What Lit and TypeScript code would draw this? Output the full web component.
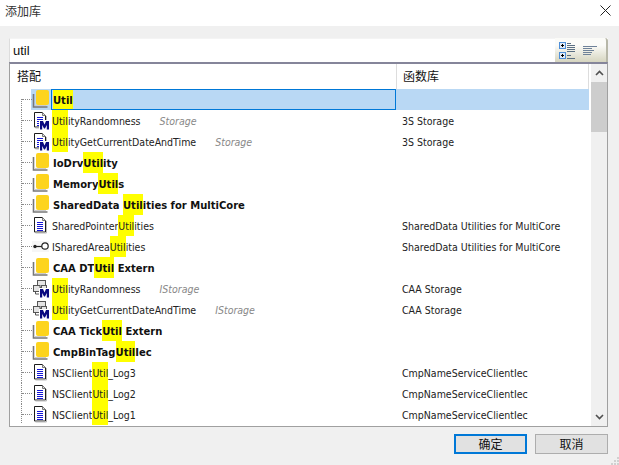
import { LitElement, html, css, svg } from "lit";
import { customElement } from "lit/decorators.js";

type Kind = "folder" | "docm" | "doc" | "key" | "ifm";
interface Row { kind: Kind; pre: string; hit: string; post: string; note?: string; lib?: string; sel?: boolean; }

const rows: Row[] = [
  { kind: "folder", pre: "", hit: "Util", post: "", sel: true },
  { kind: "docm", pre: "", hit: "Util", post: "ityRandomness", note: "Storage", lib: "3S Storage" },
  { kind: "docm", pre: "", hit: "Util", post: "ityGetCurrentDateAndTime", note: "Storage", lib: "3S Storage" },
  { kind: "folder", pre: "IoDrv", hit: "Util", post: "ity" },
  { kind: "folder", pre: "Memory", hit: "Util", post: "s" },
  { kind: "folder", pre: "SharedData ", hit: "Util", post: "ities for MultiCore" },
  { kind: "doc", pre: "SharedPointer", hit: "Util", post: "ities", lib: "SharedData Utilities for MultiCore" },
  { kind: "key", pre: "ISharedArea", hit: "Util", post: "ities", lib: "SharedData Utilities for MultiCore" },
  { kind: "folder", pre: "CAA DT", hit: "Util", post: " Extern" },
  { kind: "ifm", pre: "", hit: "Util", post: "ityRandomness", note: "IStorage", lib: "CAA Storage" },
  { kind: "ifm", pre: "", hit: "Util", post: "ityGetCurrentDateAndTime", note: "IStorage", lib: "CAA Storage" },
  { kind: "folder", pre: "CAA Tick", hit: "Util", post: " Extern" },
  { kind: "folder", pre: "CmpBinTag", hit: "Util", post: "Iec" },
  { kind: "doc", pre: "NSClient", hit: "Util", post: "_Log3", lib: "CmpNameServiceClientIec" },
  { kind: "doc", pre: "NSClient", hit: "Util", post: "_Log2", lib: "CmpNameServiceClientIec" },
  { kind: "doc", pre: "NSClient", hit: "Util", post: "_Log1", lib: "CmpNameServiceClientIec" },
];

const page = () => svg`<path d="M2.500 2.500h8l3 3v11.500h-11z" fill="#fff" stroke="#1c1c1c"/><path d="M10.500 2.500v3h3" fill="#ddd" stroke="#777"/><path d="M14.500 6v12h-11" fill="none" stroke="#bbb"/>`;
const blueLines = () => svg`<path d="M5 7.500h6M5 9.500h6M5 11.500h6M5 13.500h6M5 15.500h6" stroke="#1515d8"/>`;
const mBadge = () => svg`<rect x="7" y="10" width="11" height="10" fill="#fff"/><path d="M8 19.500v-8.500h3l1.500 3.500L14 11h3v8.500h-2.200v-4.500l-1.800 3.500h-1l-1.800-3.500v4.500z" fill="#0a0a80"/>`;

const icons: Record<Kind, () => unknown> = {
  folder: () => svg`<path d="M1.500 5v13h14" fill="none" stroke="#777" stroke-width="1.600"/><path d="M3 16.500h11" stroke="#ccc"/><rect x="4" y="1" width="13" height="15" rx="2" fill="#fdd41d"/>`,
  docm: () => svg`${page()}${blueLines()}${mBadge()}`,
  doc: () => svg`${page()}${blueLines()}`,
  key: () => svg`<rect x="0" y="5" width="17" height="11" fill="#f6f6f6"/><path d="M2 10.500h8" stroke="#222" stroke-width="1.200"/><circle cx="3" cy="10.500" r="1.700" fill="#222"/><circle cx="13" cy="10" r="3.200" fill="#fff" stroke="#222" stroke-width="1.200"/>`,
  ifm: () => svg`<g fill="#e4e4e4" stroke="#555"><rect x="5.500" y="2.500" width="8" height="7"/><rect x="1.500" y="7.500" width="6.500" height="6"/><rect x="9.500" y="7.500" width="5" height="4"/><path d="M3.500 13.500v2.500h4" fill="none"/></g>${mBadge()}`,
};

@customElement("app-root")
export class AppRoot extends LitElement {
  static styles = css`
    :host { display: block; width: 619px; height: 465px; background: #f0f0f0; overflow: hidden; position: relative;
      font-family: "DejaVu Sans", "Noto Sans CJK SC", sans-serif; font-stretch: condensed; font-size: 10.500px; color: #111; }
    .title { height: 26px; box-sizing: border-box; background: #fff; display: flex; align-items: center; justify-content: space-between; padding: 0 8px 6px 5px; font: 12px "Noto Sans CJK SC", sans-serif; color: #333; }
    .content { display: flex; flex-direction: column; padding: 12px 11px 0 9px; }
    .search { height: 24px; display: flex; background: #fff; }
    .q { flex: 1; padding-left: 3px; font: 13px/23px "Liberation Sans", sans-serif; border-left: 1px solid #ddd; border-top: 1px solid #f4f4f4; }
    .tools { width: 53px; background: linear-gradient(#fbfbf8 30%, #d6d5c0); border-radius: 0 3px 0 0; display: flex; align-items: flex-start; padding: 4px 0 0 4px; gap: 7px; box-sizing: border-box; border-right: 2px solid #b7b7a8; }
    .tree { height: 365px; box-sizing: border-box; border: 1px solid #a0a0a0; border-top: 2px solid #85859a; background: #fff; display: flex; }
    .main { width: 579px; display: flex; flex-direction: column; flex: none; }
    .head { height: 25px; display: flex; align-items: center; font: 12px "Noto Sans CJK SC", sans-serif; flex: none; }
    .hn { width: 387px; padding-left: 7px; box-sizing: border-box; border-right: 1px solid #ddd; height: 25px; line-height: 24px; }
    .hl { flex: 1; padding-left: 6px; line-height: 24px; height: 25px; border-right: 1px solid #ddd; }
    .row { height: 21px; display: flex; align-items: center; flex: none; }
    .row.sel { background: linear-gradient(90deg, #fff 21px, #b9d8f4 21px); }
    .gutter { width: 22px; height: 21px; flex: none; position: relative; }
    .gutter::before { content: ""; position: absolute; left: 11px; top: 0; bottom: 0; border-left: 1px dotted #8a8a8a; }
    .sel .gutter::before { top: 10px; }
    .row:last-child .gutter::before { bottom: 2px; }
    .gutter::after { content: ""; position: absolute; left: 12px; width: 10px; top: 10px; border-top: 1px dotted #8a8a8a; }
    .ico { width: 19px; height: 21px; flex: none; display: block; }
    .name { width: 345px; height: 21px; box-sizing: border-box; flex: none; display: flex; white-space: pre; line-height: 22px; color: #222; padding-left: 1px; }
    .name.bold { font-weight: 700; font-size: 10px; font-stretch: normal; color: #111; padding-left: 2px; line-height: 24px; }
    .sel .name.bold { border: 1px solid #0078d7; padding-left: 1px; line-height: 22px; }
    mark { background: #ff0; color: inherit; height: 21px; display: inline-block; }
    .sel mark { height: 19px; }
    .note { color: #888; font-style: italic; margin-left: 19px; }
    .lib { padding-left: 6px; color: #222; white-space: nowrap; }
    .bar { width: 16px; margin-left: 2px; background: #f0f0f0; display: flex; flex-direction: column; align-items: stretch; }
    .arrow { height: 18px; display: flex; align-items: center; justify-content: center; flex: none; }
    .thumb { height: 50px; background: #cdcdcd; flex: none; }
    .fill { flex: 1; }
    .buttons { display: flex; justify-content: flex-end; gap: 8px; margin-top: 7px; }
    .btn { width: 73px; height: 20px; box-sizing: border-box; border: 1px solid #adadad; background: #e1e1e1; font: 12px/18px "Noto Sans CJK SC", sans-serif; text-align: center; color: #111; }
    .btn.def { border: 2px solid #0078d7; line-height: 16px; }
    .grip { position: absolute; right: 0; bottom: 0; width: 8px; height: 8px; }
  `;

  render() {
    return html`
      <div class="title"><span>添加库</span>
        <svg width="11" height="11" viewBox="0 0 11 11"><path d="M.5.5l10 10M10.500.5l-10 10" stroke="#222" fill="none"/></svg>
      </div>
      <div class="content">
        <div class="search">
          <div class="q">util</div>
          <div class="tools">
            <svg width="17" height="18" viewBox="0 0 17 18">
              <rect x=".5" y=".5" width="6" height="6" fill="#dfeaf7" stroke="#4f8fd8"/>
              <rect x=".5" y="10.500" width="6" height="6" fill="#dfeaf7" stroke="#4f8fd8"/>
              <path d="M2 3.500h3M3.500 2v3M2 13.500h3M3.500 12v3" stroke="#000"/>
              <path d="M8 1.500h4M8 3.500h8M8 5.500h8M8 7.500h8M8 9.500h8M8 13.500h4M8 16.500h8" stroke="#5b6f82"/>
            </svg>
            <svg width="15" height="16" viewBox="0 0 15 16">
              <path d="M0 4.500h14M0 6.500h9M0 8.500h11M0 10.500h9M0 12.500h8" stroke="#6f8299"/>
            </svg>
          </div>
        </div>
        <div class="tree">
          <div class="main">
            <div class="head"><div class="hn">搭配</div><div class="hl">函数库</div></div>
            ${rows.map((r) => html`
              <div class="row ${r.sel ? "sel" : ""}">
                <div class="gutter"></div>
                <svg class="ico" viewBox="0 0 19 21">${icons[r.kind]()}</svg>
                <div class="name ${r.kind === "folder" ? "bold" : ""}">${r.pre}<mark>${r.hit}</mark>${r.post}${r.note ? html`<span class="note">${r.note}</span>` : ""}</div>
                <div class="lib">${r.lib ?? ""}</div>
              </div>`)}
          </div>
          <div class="bar">
            <div class="arrow"><svg width="9" height="6" viewBox="0 0 9 6"><path d="M1 5l3.500-3.500L8 5" fill="none" stroke="#505050" stroke-width="1.600"/></svg></div>
            <div class="thumb"></div>
            <div class="fill"></div>
            <div class="arrow"><svg width="9" height="6" viewBox="0 0 9 6"><path d="M1 1l3.500 3.500L8 1" fill="none" stroke="#505050" stroke-width="1.600"/></svg></div>
          </div>
        </div>
        <div class="buttons">
          <div class="btn def">确定</div>
          <div class="btn">取消</div>
        </div>
      </div>
      <svg class="grip" viewBox="0 0 8 8"><path d="M6 0h2v2H6zM3 3h2v2H3zM6 3h2v2H6zM0 6h2v2H0zM3 6h2v2H3zM6 6h2v2H6z" fill="#d0d0d0"/></svg>
    `;
  }
}
